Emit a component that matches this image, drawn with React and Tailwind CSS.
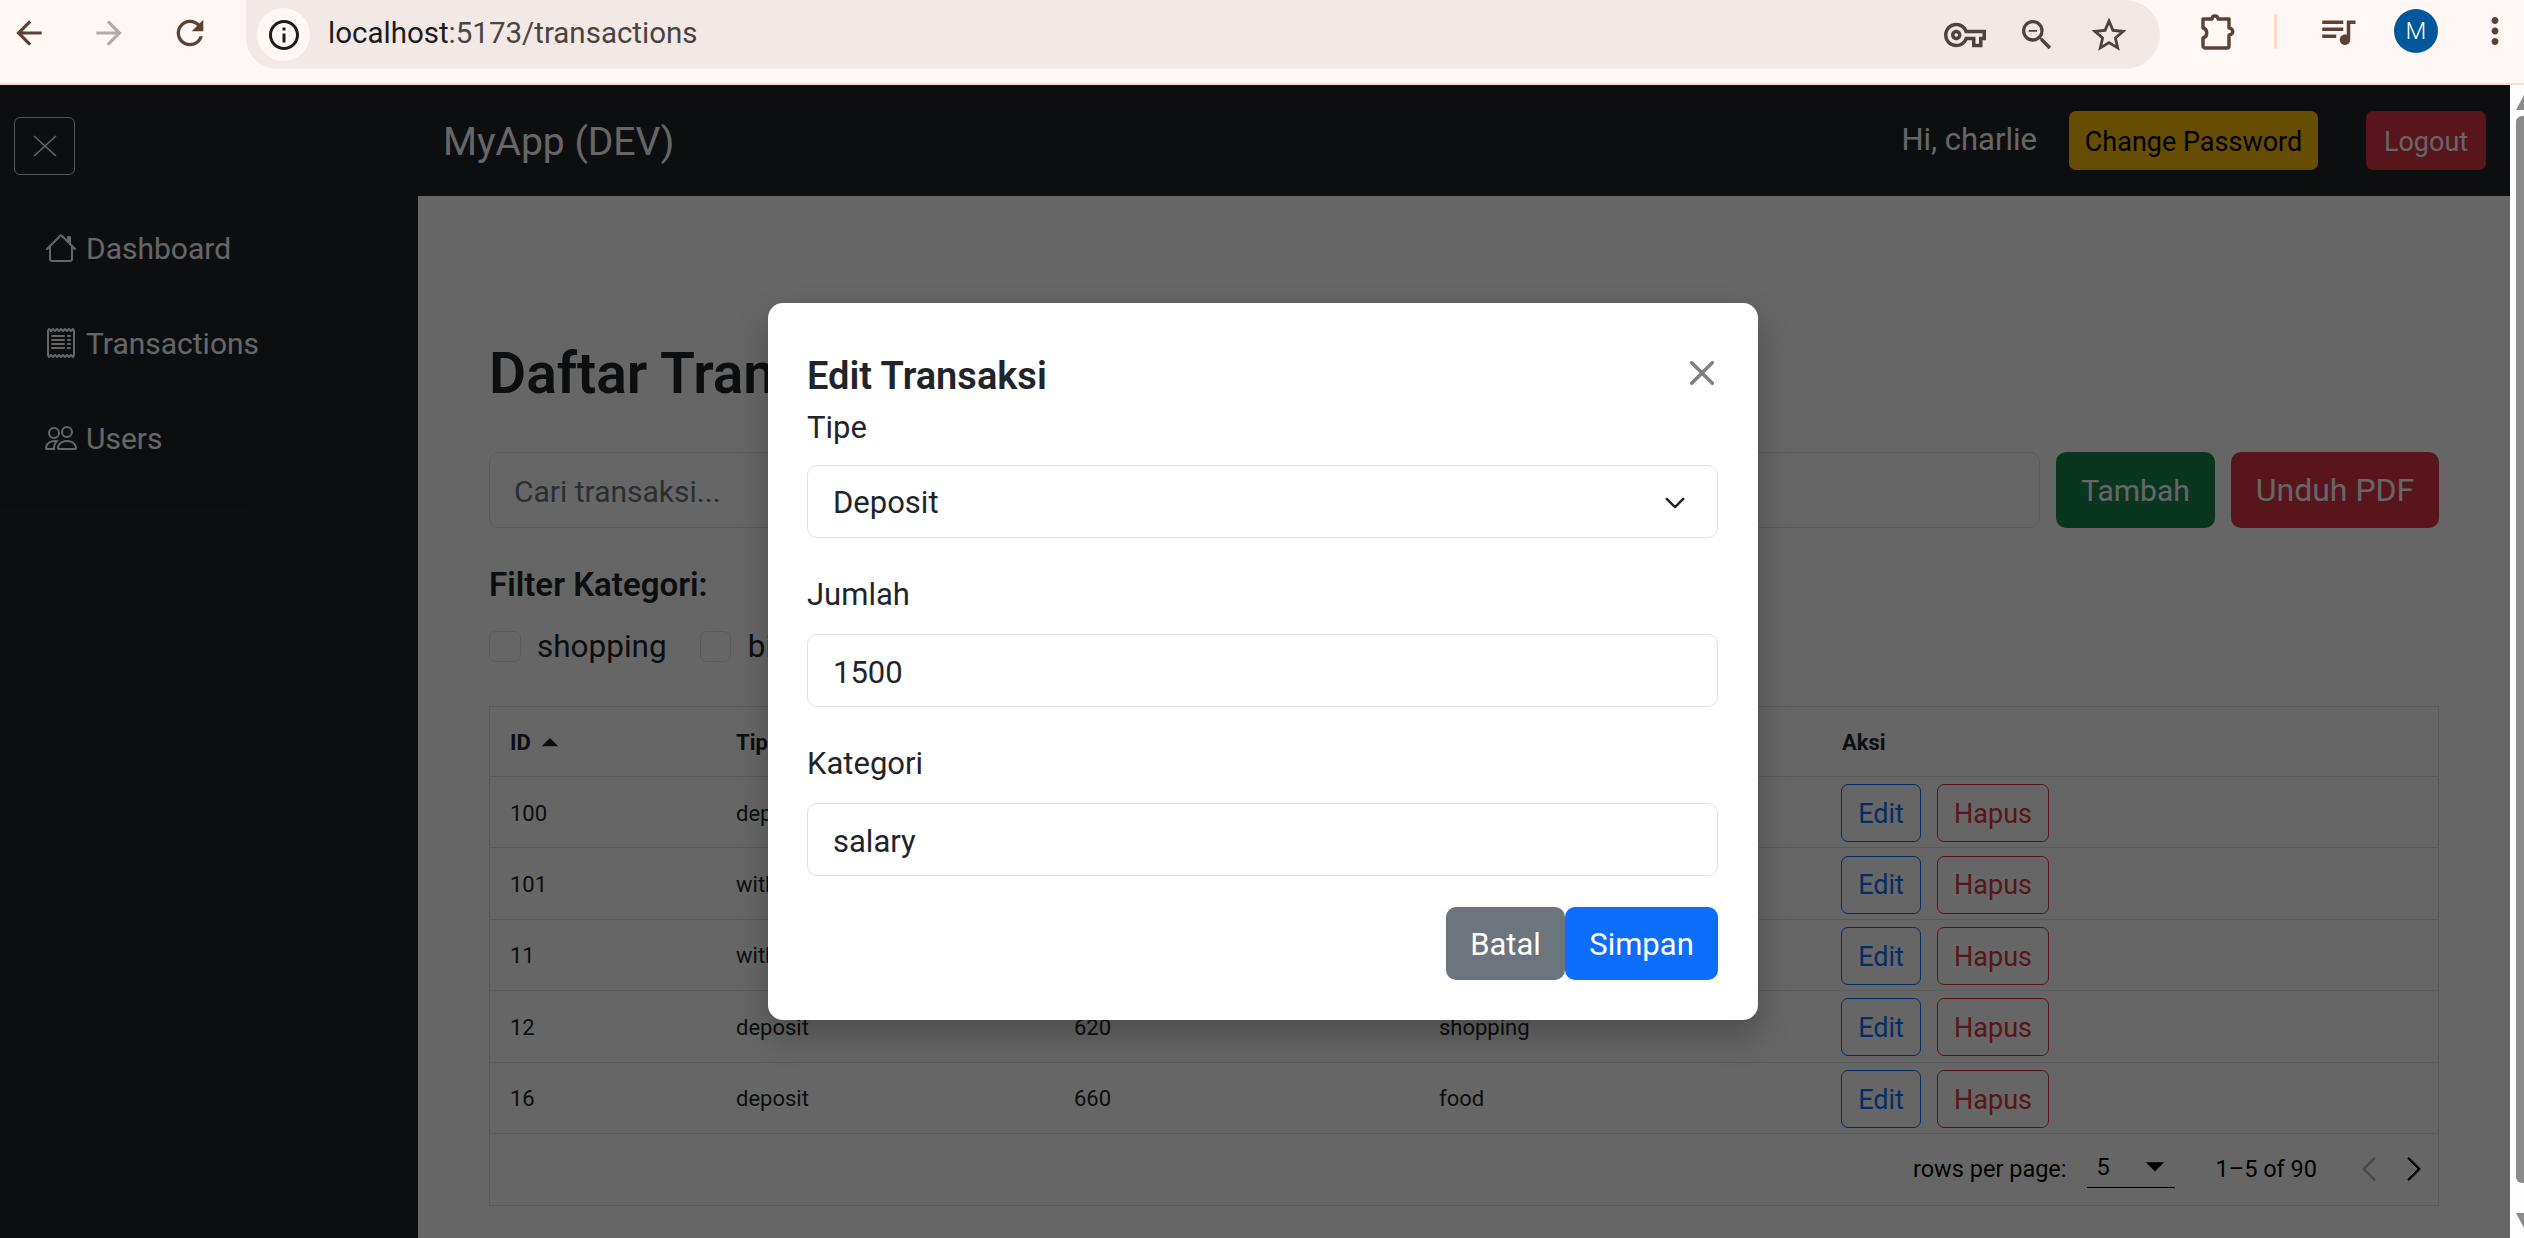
import React from 'react';
import {BsHouse, BsPeople, BsReceipt, BsChevronDown, BsChevronLeft, BsChevronRight, BsXLg} from 'react-icons/bs';
import {MdArrowBack, MdArrowForward, MdRefresh, MdInfoOutline, MdZoomOut, MdStarBorder, MdMoreVert, MdQueueMusic, MdOutlineVpnKey, MdArrowDropDown, MdArrowDropUp} from 'react-icons/md';

const rows = [
  {id: '100', type: 'deposit', amount: '1500', category: 'salary'},
  {id: '101', type: 'withdraw', amount: '410', category: 'bills'},
  {id: '11', type: 'withdraw', amount: '510', category: 'food'},
  {id: '12', type: 'deposit', amount: '620', category: 'shopping'},
  {id: '16', type: 'deposit', amount: '660', category: 'food'},
];

const nav = [
  {label: 'Dashboard', Icon: BsHouse},
  {label: 'Transactions', Icon: BsReceipt},
  {label: 'Users', Icon: BsPeople},
];

const gridCols = 'grid grid-cols-[247px_338px_365px_402px_1fr]';

const Toolbar = () => (
  <div className="h-[85px] shrink-0 bg-[#fff8f5] border-b-2 border-[#f6e0d6] flex items-start text-[#5d4037]">
    <div className="flex items-center h-[66px] pl-[10px] gap-[42px]">
      <MdArrowBack size={38}/>
      <MdArrowForward size={38} className="text-[#b5aaa6]"/>
      <MdRefresh size={40}/>
    </div>
    <div className="ml-[36px] w-[1914px] h-[69px] bg-[#f2e8e5] rounded-r-[40px] rounded-bl-[36px] flex items-center pl-[11px] pr-[30px]">
      <div className="w-[53px] h-[53px] rounded-full bg-[#fff8f5] flex items-center justify-center text-[#1d1b1a]">
        <MdInfoOutline size={36}/>
      </div>
      <span className="ml-[18px] -mt-[2px] text-[29.5px] text-[#4a4340] flex-1"><span className="text-[#1d1b1a]">localhost</span>:5173/transactions</span>
      <div className="flex items-center gap-[31px] text-[#4e4340]">
        <MdOutlineVpnKey size={42}/>
        <MdZoomOut size={40}/>
        <MdStarBorder size={42}/>
      </div>
    </div>
    <div className="flex items-center h-[62px] pl-[40px]">
      <svg width="36" height="38" viewBox="0 0 36 38" fill="none" stroke="currentColor" strokeWidth="3.4" strokeLinejoin="round">
        <path d="M3 7h9c0-4 6-4 6 0h11v9c5 0 5 7 0 7v11a2 2 0 0 1-2 2H5a2 2 0 0 1-2-2v-8c5-1 5-9 0-10z"/>
      </svg>
      <div className="ml-[38px] w-[3px] h-[35px] rounded bg-[#fcdcc9]"/>
      <MdQueueMusic size={42} className="ml-[40px]"/>
      <div className="ml-[35px] w-[44px] h-[44px] rounded-full bg-[#01579b] text-white text-[24px] font-light flex items-center justify-center">M</div>
      <MdMoreVert size={42} className="ml-[36px]"/>
    </div>
  </div>
);

const Sidebar = () => (
  <div className="w-[418px] shrink-0 bg-[#212529] text-white">
    <div className="pl-[14px] pt-[32px]">
      <div className="w-[61px] h-[58px] border border-white/80 rounded-[6px] flex items-center justify-center">
        <svg width="24" height="22" viewBox="0 0 24 22" stroke="currentColor" strokeWidth="1.5"><path d="M1 1l22 20M23 1L1 21"/></svg>
      </div>
    </div>
    <div className="pl-[45px] pt-[53px] flex flex-col gap-[55px]">
      {nav.map(({label, Icon}) => (
        <div key={label} className="flex items-center gap-[9px] h-[40px] text-[30px]">
          <Icon size={32}/>
          <span>{label}</span>
        </div>
      ))}
    </div>
  </div>
);

const Header = () => (
  <div className="h-[111px] bg-[#212529] flex items-start pl-[25px] pr-[24px] text-white">
    <span className="mt-[34px] text-[39px] leading-[46px]">MyApp (DEV)</span>
    <div className="ml-auto flex items-start pt-[26px]">
      <span className="mt-[9px] text-[31px] leading-[40px]">Hi, charlie</span>
      <button className="ml-[32px] w-[249px] h-[59px] pt-[3px] bg-[#ffc107] text-black text-[27px] rounded-[7px]">Change Password</button>
      <button className="ml-[48px] w-[120px] h-[59px] pt-[3px] bg-[#dc3545] text-white text-[27px] rounded-[7px]">Logout</button>
    </div>
  </div>
);

const Table = () => (
  <div className="mt-[44px] border border-[#dee2e6] text-[22px] text-[#212529]">
    <div className={`${gridCols} h-[70px] pt-[2px] items-center border-b border-[#dee2e6] font-bold`}>
      <div className="pl-[20px] flex items-center gap-[9px]">ID <MdArrowDropUp size={40} className="-mx-[10px]"/></div>
      <div className="-ml-[1px]">Tipe</div>
      <div>Jumlah</div>
      <div>Kategori</div>
      <div>Aksi</div>
    </div>
    {rows.map((row) => (
      <div key={row.id} className={`${gridCols} h-[71.4px] items-center border-b border-[#dee2e6]`}>
        <div className="pl-[20px] pt-[2px]">{row.id}</div>
        <div className="-ml-[1px] pt-[2px]">{row.type}</div>
        <div className="-ml-[1px] pt-[2px]">{row.amount}</div>
        <div className="-ml-[1px] pt-[2px]">{row.category}</div>
        <div className="flex gap-[16px] text-[27px] -ml-[1px] mt-[2px]">
          <button className="w-[80px] h-[58px] pt-[2px] border border-[#0d6efd] text-[#0d6efd] rounded-[7px]">Edit</button>
          <button className="w-[112px] h-[58px] pt-[2px] border border-[#dc3545] text-[#dc3545] rounded-[7px]">Hapus</button>
        </div>
      </div>
    ))}
    <div className="h-[71px] flex items-center justify-end pr-[10px] text-[23.5px] text-black">
      <span>rows per page:</span>
      <div className="ml-[20px] w-[88px] h-[38px] border-b border-black flex items-start justify-between pl-[10px]">
        <span>5</span>
        <MdArrowDropDown size={44} className="-mt-[6px] -mr-[2px]"/>
      </div>
      <span className="ml-[41px]">1–5 of 90</span>
      <BsChevronLeft size={28} strokeWidth={0.5} className="ml-[38px] text-[#00000042]"/>
      <BsChevronRight size={28} strokeWidth={0.5} className="ml-[17px]"/>
    </div>
  </div>
);

const Main = () => (
  <div className="flex-1 min-w-0 flex flex-col">
    <Header/>
    <div className="flex-1 bg-white px-[71px] pt-[141px] text-[#212529]">
      <h2 className="text-[57px] leading-[73px] font-semibold">Daftar Transaksi</h2>
      <div className="mt-[42px] flex items-stretch h-[76px]">
        <input readOnly placeholder="Cari transaksi..." className="flex-1 border border-[#dee2e6] rounded-[10px] px-[24px] pt-[2px] text-[30px] placeholder:text-[#6c757d]"/>
        <button className="ml-[16px] w-[159px] bg-[#198754] text-white text-[30px] rounded-[10px]">Tambah</button>
        <button className="ml-[16px] w-[208px] bg-[#dc3545] text-white text-[32px] rounded-[10px]">Unduh PDF</button>
      </div>
      <div className="mt-[37px] h-[40px] leading-[40px] text-[33px] font-semibold">Filter Kategori:</div>
      <div className="mt-[26px] flex items-center text-[31.5px] h-[31px]">
        <span className="w-[32px] h-[31px] border border-[#dee2e6] rounded-[7px]"/>
        <span className="ml-[16px]">shopping</span>
        <span className="ml-[33px] w-[31px] h-[31px] border border-[#dee2e6] rounded-[7px]"/>
        <span className="ml-[17px]">bills</span>
      </div>
      <Table/>
    </div>
  </div>
);

const Field = ({label, value}) => (
  <div className="mt-[37px]">
    <div className="h-[40px] leading-[40px] text-[31px]">{label}</div>
    <input readOnly value={value} className="mt-[19px] w-full h-[73px] border border-[#dee2e6] rounded-[10px] px-[25px] pt-[3px] text-[31px] text-[#212529]"/>
  </div>
);

const Modal = () => (
  <div className="absolute inset-0 bg-black/60 flex justify-center items-start pt-[218px] pl-[15px]">
    <div className="w-[990px] h-[717px] bg-white rounded-[15px] px-[39.5px] text-[#212529] shadow-[0_16px_32px_rgba(0,0,0,0.25)]">
      <div className="pt-[50px] h-[105px] flex justify-between items-start">
        <h5 className="text-[38px] leading-[46px] font-semibold">Edit Transaksi</h5>
        <BsXLg size={30} strokeWidth={0.9} className="mt-[5px] mr-[1px] text-[#808080]"/>
      </div>
      <div className="h-[40px] leading-[40px] text-[31px]">Tipe</div>
      <div className="mt-[17px] h-[73px] pt-[3px] border border-[#dee2e6] rounded-[10px] pl-[25px] pr-[31px] text-[31px] flex items-center justify-between">
        <span>Deposit</span>
        <BsChevronDown size={22} strokeWidth={0.8}/>
      </div>
      <Field label="Jumlah" value="1500"/>
      <Field label="Kategori" value="salary"/>
      <div className="mt-[31px] flex justify-end text-[31px] text-white">
        <button className="w-[119px] h-[73px] pt-[3px] bg-[#6c757d] rounded-[10px]">Batal</button>
        <button className="w-[153px] h-[73px] pt-[3px] bg-[#0d6efd] rounded-[10px]">Simpan</button>
      </div>
    </div>
  </div>
);

const Scrollbar = () => (
  <div className="w-[14px] shrink-0 bg-[#fdfdfd] flex flex-col items-end pt-[10px] pb-[8px]">
    <div className="w-0 h-0 border-l-[8px] border-r-[0px] border-b-[15px] border-transparent border-b-[#8b8b8b]"/>
    <div className="mt-[6px] w-[8px] h-[1067px] rounded-l-[6px] bg-[#8b8b8b]"/>
    <div className="mt-[30px] w-0 h-0 border-l-[8px] border-t-[15px] border-transparent border-t-[#8b8b8b]"/>
  </div>
);

const App = () => (
  <div className="w-[2524px] h-[1238px] overflow-hidden flex flex-col bg-white font-['Roboto','Noto_Sans',sans-serif]">
    <Toolbar/>
    <div className="flex-1 flex min-h-0">
      <div className="relative flex-1 min-w-0 flex">
        <Sidebar/>
        <Main/>
        <Modal/>
      </div>
      <Scrollbar/>
    </div>
  </div>
);

export default App;
